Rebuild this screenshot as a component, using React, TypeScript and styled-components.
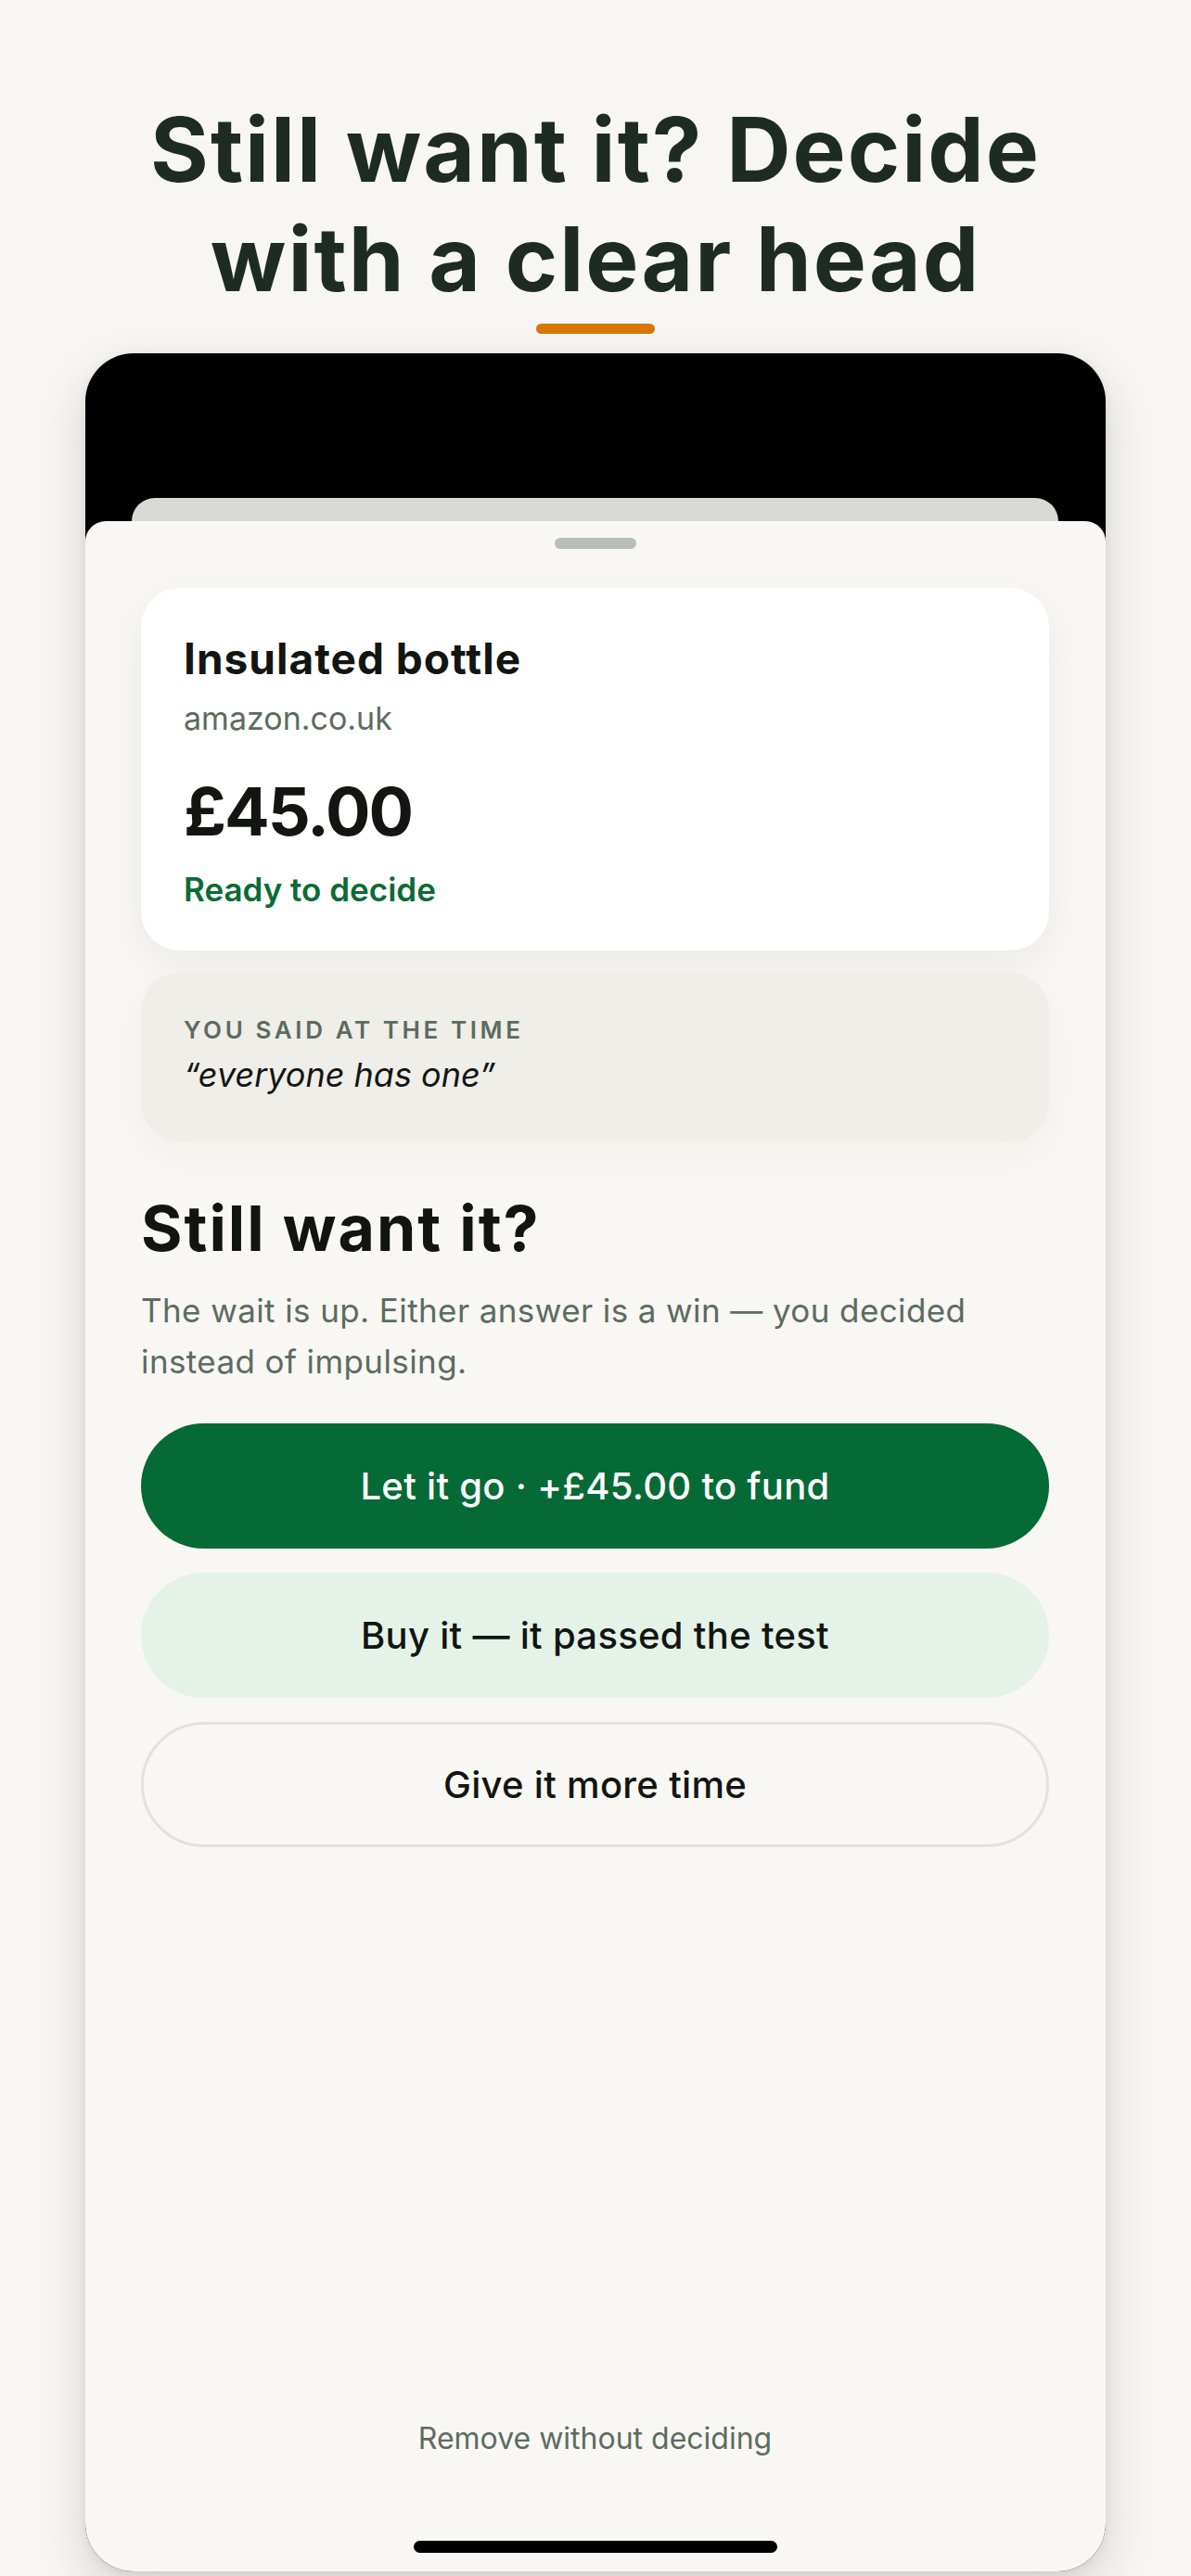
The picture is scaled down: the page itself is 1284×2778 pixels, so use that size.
import React, { FC } from "react";
import styled, { createGlobalStyle } from "styled-components";

const GlobalStyle = createGlobalStyle`
  html, body {
    margin: 0;
    padding: 0;
    background: #f7f6f2;
  }

  body {
    font-family: Inter, "Liberation Sans", sans-serif;
    -webkit-font-smoothing: antialiased;
  }
`;

type Variant = "primary" | "soft" | "outline";

const actions: { label: string; variant: Variant }[] = [
  { label: "Let it go · +£45.00 to fund", variant: "primary" },
  { label: "Buy it — it passed the test", variant: "soft" },
  { label: "Give it more time", variant: "outline" },
];

const App: FC = () => {
  return (
    <>
      <GlobalStyle />
      <Page>
        <Headline>
          Still want it? Decide
          <br />
          with a clear head
        </Headline>
        <Accent />

        <Phone>
          <StatusArea />
          <BackCard />
          <Sheet>
            <Grabber />

            <ItemCard>
              <ItemName>Insulated bottle</ItemName>
              <ItemStore>amazon.co.uk</ItemStore>
              <ItemPrice>£45.00</ItemPrice>
              <ItemStatus>Ready to decide</ItemStatus>
            </ItemCard>

            <QuoteCard>
              <QuoteLabel>You said at the time</QuoteLabel>
              <QuoteText>“everyone has one”</QuoteText>
            </QuoteCard>

            <Question>Still want it?</Question>
            <Lead>
              The wait is up. Either answer is a win — you decided instead of
              impulsing.
            </Lead>

            <Actions>
              {actions.map((a) => (
                <ActionButton key={a.label} variant={a.variant}>
                  {a.label}
                </ActionButton>
              ))}
            </Actions>

            <Spacer />

            <RemoveLink>Remove without deciding</RemoveLink>
            <HomeIndicator />
          </Sheet>
        </Phone>
      </Page>
    </>
  );
};

export default App;

const Page = styled.div`
  display: flex;
  flex-direction: column;
  align-items: center;
  min-height: 2778px;
  padding-top: 102px;
  box-sizing: border-box;
  overflow: hidden;
`;

const Headline = styled.h1`
  margin: 0;
  font-family: Inter, "Liberation Sans", sans-serif;
  font-size: 96px;
  line-height: 118px;
  font-weight: 700;
  letter-spacing: 2px;
  text-align: center;
  color: #1e2b24;
`;

const Accent = styled.div`
  width: 128px;
  height: 11px;
  margin-top: 11px;
  border-radius: 6px;
  background: #d97706;
`;

const Phone = styled.div`
  display: flex;
  flex-direction: column;
  width: 1100px;
  height: 2392px;
  margin-top: 21px;
  border-radius: 52px;
  background: #000000;
  overflow: hidden;
  box-shadow: 0 20px 50px rgba(40, 40, 30, 0.16), 0 2px 8px rgba(40, 40, 30, 0.08);
`;

const StatusArea = styled.div`
  flex: 0 0 156px;
`;

const BackCard = styled.div`
  flex: 0 0 25px;
  margin: 0 51px 0 50px;
  border-radius: 25px 25px 0 0;
  background: #d9d9d6;
`;

const Sheet = styled.div`
  flex: 1 1 auto;
  display: flex;
  flex-direction: column;
  padding: 0 61px 0 60px;
  border-radius: 22px 22px 0 0;
  background: #f8f7f3;
`;

const Grabber = styled.div`
  align-self: center;
  width: 88px;
  height: 12px;
  margin-top: 18px;
  border-radius: 6px;
  background: #b9beb8;
`;

const ItemCard = styled.div`
  display: flex;
  flex-direction: column;
  margin-top: 42px;
  padding: 48px 46px 45px;
  border-radius: 42px;
  background: #ffffff;
  box-shadow: 0 14px 44px rgba(40, 40, 30, 0.06);
`;

const ItemName = styled.div`
  font-size: 46px;
  line-height: 56px;
  font-weight: 700;
  letter-spacing: 1px;
  color: #121512;
`;

const ItemStore = styled.div`
  margin-top: 16px;
  font-size: 34px;
  line-height: 42px;
  color: #5d6b60;
`;

const ItemPrice = styled.div`
  margin-top: 39px;
  font-size: 72px;
  line-height: 80px;
  font-weight: 700;
  letter-spacing: -2px;
  color: #121512;
`;

const ItemStatus = styled.div`
  margin-top: 23px;
  font-size: 35px;
  line-height: 42px;
  font-weight: 600;
  color: #0b6b35;
`;

const QuoteCard = styled.div`
  display: flex;
  flex-direction: column;
  margin-top: 24px;
  padding: 46px 46px 50px;
  border-radius: 42px;
  background: #efeee9;
  box-shadow: 0 14px 44px rgba(40, 40, 30, 0.04);
`;

const QuoteLabel = styled.div`
  font-size: 26px;
  line-height: 32px;
  font-weight: 600;
  letter-spacing: 3.6px;
  text-transform: uppercase;
  color: #5b6b5f;
`;

const QuoteText = styled.div`
  margin-top: 10px;
  font-size: 36px;
  line-height: 44px;
  font-style: italic;
  color: #121512;
`;

const Question = styled.h2`
  margin: 53px 0 0;
  font-size: 68px;
  line-height: 80px;
  font-weight: 700;
  letter-spacing: 2px;
  color: #111411;
`;

const Lead = styled.p`
  margin: 22px 0 0;
  font-size: 35px;
  line-height: 55px;
  letter-spacing: 0.4px;
  color: #5d6b60;
`;

const Actions = styled.div`
  display: flex;
  flex-direction: column;
  gap: 26px;
  margin-top: 39px;
`;

const ActionButton = styled.button<{ variant: Variant }>`
  height: 135px;
  border-radius: 68px;
  font-family: Inter, "Liberation Sans", sans-serif;
  font-size: 40px;
  font-weight: 500;
  letter-spacing: 0.3px;
  cursor: pointer;
  box-sizing: border-box;
  color: ${({ variant }) => (variant === "primary" ? "#ffffff" : "#121512")};
  background: ${({ variant }) =>
    variant === "primary" ? "#066a37" : variant === "soft" ? "#e5f2e8" : "transparent"};
  border: ${({ variant }) => (variant === "outline" ? "3px solid #e4e2dc" : "none")};
`;

const Spacer = styled.div`
  flex: 1 1 auto;
`;

const RemoveLink = styled.div`
  font-size: 32px;
  line-height: 40px;
  text-align: center;
  color: #5d6b60;
`;

const HomeIndicator = styled.div`
  align-self: center;
  width: 392px;
  height: 13px;
  margin: 90px 0 20px;
  border-radius: 7px;
  background: #000000;
`;
